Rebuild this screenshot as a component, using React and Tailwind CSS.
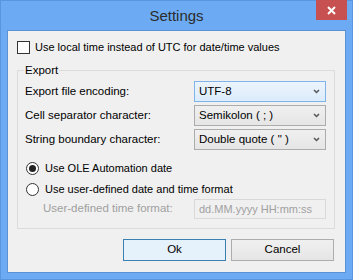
import React from 'react';

const font = { fontFamily: '"Liberation Sans", Arial, sans-serif' };

function Chevron() {
  return (
    <svg width="7" height="5" viewBox="0 0 7 5" className="shrink-0">
      <path d="M1 1 L3.5 3.5 L6 1" fill="none" stroke="#555" strokeWidth="1.5" />
    </svg>
  );
}

function Select({ value, active }) {
  return (
    <div
      className={
        'w-[132px] h-[21px] flex items-center justify-between pl-[4px] pr-[5px] border ' +
        (active
          ? 'border-[#7eb4ea] bg-gradient-to-b from-[#ecf4fc] to-[#dcecfc]'
          : 'border-[#acacac] bg-gradient-to-b from-[#f0f0f0] to-[#e5e5e5]')
      }
    >
      <span className="text-[11.5px] text-black leading-none">{value}</span>
      <Chevron />
    </div>
  );
}

function Row({ label, value, active }) {
  return (
    <div className="flex items-center h-[21px]">
      <span className="w-[169px] text-[11.5px] text-black">{label}</span>
      <Select value={value} active={active} />
    </div>
  );
}

function Radio({ checked, label }) {
  return (
    <div className="flex items-center gap-[6px] h-[13px]">
      <div className="w-[13px] h-[13px] rounded-full border border-[#333] bg-white flex items-center justify-center">
        {checked && <div className="w-[7px] h-[7px] rounded-full bg-[#222]" />}
      </div>
      <span className="text-[11px] text-black">{label}</span>
    </div>
  );
}

export default function App() {
  return (
    <div
      style={font}
      className="w-[353px] h-[280px] bg-[#6cabf3] border border-[#5a96de] flex flex-col"
    >
      {/* title bar */}
      <div className="relative h-[29px] flex items-center justify-center">
        <span className="text-[15px] text-[#2b2b2b] mt-[1px]">Settings</span>
        <div className="absolute top-[-1px] right-[5px] w-[31px] h-[20px] bg-[#c75050] flex items-center justify-center">
          <svg width="9" height="9" viewBox="0 0 9 9">
            <path d="M1 1 L8 8 M8 1 L1 8" stroke="white" strokeWidth="2" />
          </svg>
        </div>
      </div>

      {/* client area */}
      <div className="ml-[6px] mr-[6px] h-[243px] bg-[#f0f0f0] border border-[#5a92d6] flex flex-col px-[9px] pt-[10px]">
        <div className="flex items-center gap-[5px] h-[13px]">
          <div className="w-[13px] h-[13px] border border-[#333] bg-white" />
          <span className="text-[11px] text-black">Use local time instead of UTC for date/time values</span>
        </div>

        {/* group box */}
        <div className="relative mt-[16px] w-[318px] h-[159px] border border-[#dcdcdc] pl-[7px] pt-[10px]">
          <span className="absolute left-[6px] top-[-8px] bg-[#f0f0f0] px-[1px] text-[11.5px] text-black leading-[14px]">
            Export
          </span>
          <div className="flex flex-col gap-[3px]">
            <Row label="Export file encoding:" value="UTF-8" active />
            <Row label="Cell separator character:" value="Semikolon ( ; )" />
            <Row label="String boundary character:" value={'Double quote ( " )'} />
          </div>
          <div className="flex flex-col gap-[8px] mt-[12px] pl-[1px]">
            <Radio checked label="Use OLE Automation date" />
            <Radio label="Use user-defined date and time format" />
          </div>
          <div className="flex items-center mt-[3px] h-[20px]">
            <span className="w-[169px] pl-[18px] text-[11.5px] text-[#a0a0a0]">User-defined time format:</span>
            <div className="w-[132px] h-[20px] border border-[#d9d9d9] flex items-center pl-[4px]">
              <span className="text-[11px] text-[#a0a0a0]">dd.MM.yyyy HH:mm:ss</span>
            </div>
          </div>
        </div>

        {/* buttons */}
        <div className="flex justify-end gap-[5px] mt-[10px] pr-[2px]">
          <div className="w-[103px] h-[22px] border border-[#3c7fb1] bg-[#e5f1fb] flex items-center justify-center text-[11.5px] text-black">
            Ok
          </div>
          <div className="w-[103px] h-[22px] border border-[#adadad] bg-gradient-to-b from-[#f0f0f0] to-[#e5e5e5] flex items-center justify-center text-[11.5px] text-black">
            Cancel
          </div>
        </div>
      </div>
    </div>
  );
}
